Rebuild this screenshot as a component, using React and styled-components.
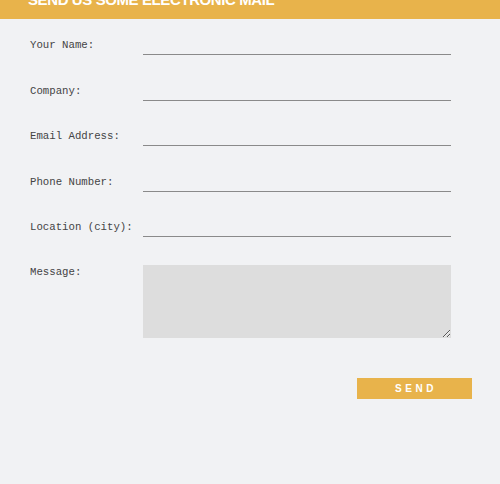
import React from 'react'
import styled, { createGlobalStyle } from 'styled-components'

const GlobalStyle = createGlobalStyle`
  html, body {
    margin: 0;
    padding: 0;
    background-color: #f1f2f4;
  }
`

const Page = styled.div`
  width: 500px;
  min-height: 484px;
  background-color: #f1f2f4;
`

const Header = styled.div`
  height: 19px;
  background-color: #e8b34b;
  overflow: hidden;
  display: flex;
  align-items: flex-end;
  padding: 0 0 12px 28px;
  box-sizing: border-box;
`

const HeaderTitle = styled.h2`
  margin: 0;
  font-family: 'Liberation Sans', Arial, sans-serif;
  font-weight: 700;
  font-size: 15px;
  line-height: 15px;
  letter-spacing: -0.4px;
  color: #ffffff;
  text-transform: uppercase;
  white-space: nowrap;
`

const Form = styled.form`
  display: flex;
  flex-direction: column;
  padding: 16px 0 0 30px;
  gap: 25.5px;
`

const Row = styled.div`
  display: grid;
  grid-template-columns: 113px 308px;
  align-items: ${({ $top }) => ($top ? 'start' : 'center')};
  margin-top: ${({ $top }) => ($top ? '2.5px' : '0')};
`

const Label = styled.label`
  font-family: 'Liberation Mono', 'Courier New', monospace;
  font-size: 10.7px;
  line-height: 14px;
  color: #444444;
`

const Input = styled.input`
  height: 20px;
  box-sizing: border-box;
  border: none;
  border-bottom: 1px solid #8a8a8a;
  background: transparent;
  outline: none;
  padding: 0;
  width: 100%;
`

const TextArea = styled.textarea`
  height: 73px;
  width: 100%;
  box-sizing: border-box;
  border: none;
  background-color: #dddddd;
  outline: none;
  padding: 0;
  display: block;
`

const Actions = styled.div`
  display: flex;
  justify-content: flex-end;
  padding: 40px 28px 0 0;
`

const SendButton = styled.button`
  width: 115px;
  height: 21px;
  border: none;
  background-color: #e8b34b;
  color: #ffffff;
  font-family: 'Liberation Sans', Arial, sans-serif;
  font-weight: 700;
  font-size: 10px;
  letter-spacing: 3.6px;
  padding: 0 0 0 3px;
  cursor: pointer;
`

const fields = [
  { id: 'name', label: 'Your Name:' },
  { id: 'company', label: 'Company:' },
  { id: 'email', label: 'Email Address:' },
  { id: 'phone', label: 'Phone Number:' },
  { id: 'city', label: 'Location (city):' },
]

const App = () => (
  <Page>
    <GlobalStyle />
    <Header>
      <HeaderTitle>Send us some electronic mail</HeaderTitle>
    </Header>
    <Form onSubmit={e => e.preventDefault()}>
      {fields.map(({ id, label }) => (
        <Row key={id}>
          <Label htmlFor={id}>{label}</Label>
          <Input id={id} type="text" />
        </Row>
      ))}
      <Row $top>
        <Label htmlFor="message">Message:</Label>
        <TextArea id="message" />
      </Row>
    </Form>
    <Actions>
      <SendButton type="button">SEND</SendButton>
    </Actions>
  </Page>
)

export default App
